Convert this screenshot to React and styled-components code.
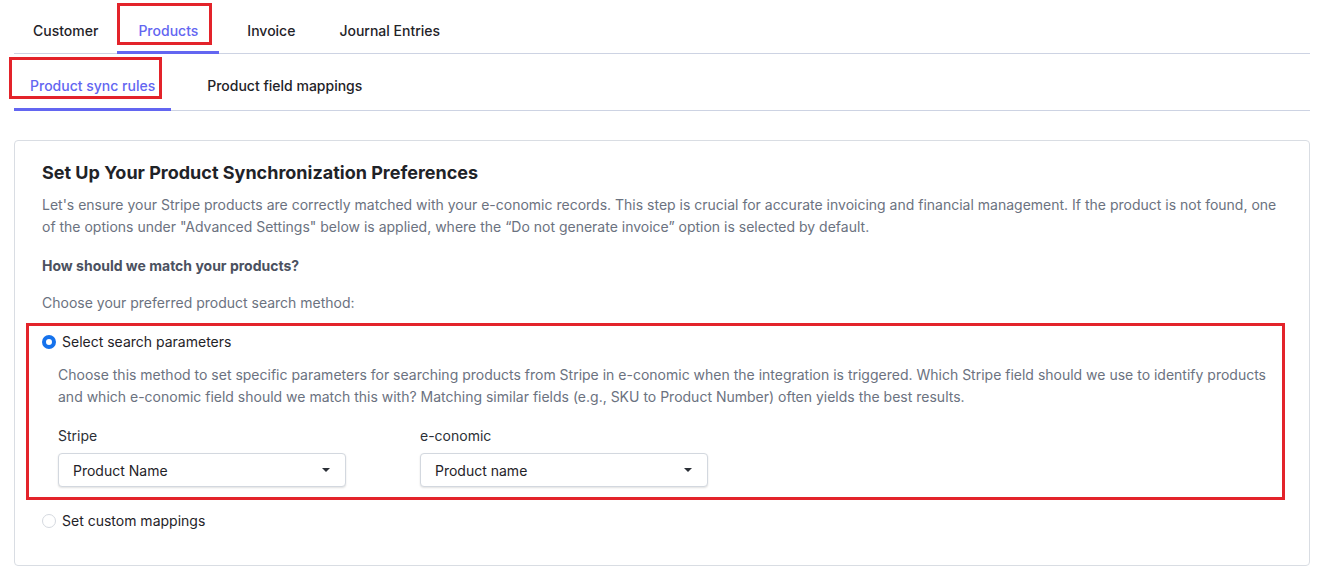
import React from "react";
import styled, { createGlobalStyle, css } from "styled-components";

const Global = createGlobalStyle`
  html, body { margin: 0; padding: 0; background: #fff; }
  body { font-family: Inter, "Noto Sans", "Liberation Sans", sans-serif; color: #1f2328; }
  * { box-sizing: border-box; }
`;

const RED = "#e3232a";
const ACCENT = "#6366f1";

const markBox = css`
  &::after {
    content: "";
    position: absolute;
    inset: ${(p) => p.$mark};
    border: 3px solid ${RED};
    pointer-events: none;
  }
`;

const Page = styled.div`
  padding: 9px 19px 0 14px;
`;

const TabBar = styled.div`
  display: flex;
  align-items: stretch;
  gap: ${(p) => p.$gap || 0}px;
  border-bottom: 1px solid #cdd3e3;
  margin-top: ${(p) => p.$top || 0}px;
`;

const Tab = styled.div`
  position: relative;
  display: flex;
  align-items: center;
  height: ${(p) => p.$h}px;
  padding: 0 ${(p) => p.$px}px;
  margin-left: ${(p) => p.$ml || 0}px;
  margin-bottom: -1px;
  font-size: 14px;
  font-weight: 500;
  color: ${(p) => (p.$active ? ACCENT : "#1f2328")};
  border-bottom: 3px solid ${(p) => (p.$active ? ACCENT : "transparent")};
  white-space: nowrap;
  ${(p) => p.$mark && markBox}
`;

const Card = styled.section`
  margin-top: 29px;
  border: 1px solid #d9dde3;
  border-radius: 4px;
  padding: 19px 26px 33px 27px;
`;

const Title = styled.h2`
  margin: 0 0 8px;
  font-size: 18px;
  line-height: 26px;
  font-weight: 700;
  color: #1f2328;
`;

const Text = styled.p`
  margin: 0 0 ${(p) => p.$mb || 0}px;
  font-size: 14px;
  line-height: 22px;
  font-weight: ${(p) => (p.$bold ? 700 : 400)};
  color: ${(p) => (p.$bold ? "#4b5160" : "#6b7280")};
`;

const OptionBlock = styled.div`
  position: relative;
  margin-top: 17px;
  ${markBox}
`;

const RadioRow = styled.label`
  display: flex;
  align-items: center;
  gap: 6px;
  font-size: 14px;
  line-height: 22px;
  color: #1f2328;
  margin-top: ${(p) => p.$top || 0}px;
`;

const Radio = styled.span`
  width: 14px;
  height: 14px;
  border-radius: 50%;
  flex: none;
  background: #fff;
  border: ${(p) => (p.$checked ? "4px solid #1672ec" : "1px solid #d5d9df")};
`;

const Indented = styled.div`
  padding-left: 16px;
  margin-top: 11px;
`;

const Fields = styled.div`
  display: flex;
  gap: 74px;
  margin-top: 18px;
`;

const Field = styled.div`
  display: flex;
  flex-direction: column;
  gap: 7px;
  width: 288px;
`;

const Label = styled.span`
  font-size: 14px;
  line-height: 20px;
  color: #2b2f36;
`;

const Select = styled.div`
  height: 34px;
  display: flex;
  align-items: center;
  justify-content: space-between;
  padding: 0 15px 0 14px;
  border: 1px solid #d3d8df;
  border-radius: 4px;
  box-shadow: 0 1px 2px rgba(0, 0, 0, 0.12);
  font-size: 14px;
  color: #1f2328;
  background: #fff;
`;

const Caret = styled.span`
  width: 0;
  height: 0;
  border-left: 4px solid transparent;
  border-right: 4px solid transparent;
  border-top: 4px solid #2b2f36;
`;

export default function App() {
  return (
    <>
      <Global />
      <Page>
        <TabBar>
          <Tab $h={45} $px={19}>Customer</Tab>
          <Tab $h={45} $px={21} $active $mark="-6px 7px 6px 0">Products</Tab>
          <Tab $h={45} $px={20} $ml={8}>Invoice</Tab>
          <Tab $h={45} $px={20} $ml={4}>Journal Entries</Tab>
        </TabBar>
        <TabBar $gap={20} $top={9}>
          <Tab $h={48} $px={16} $active $mark="-6px 9px 9px -5px">Product sync rules</Tab>
          <Tab $h={48} $px={16}>Product field mappings</Tab>
        </TabBar>
        <Card>
          <Title>Set Up Your Product Synchronization Preferences</Title>
          <Text $mb={17}>
            Let's ensure your Stripe products are correctly matched with your e-conomic records. This step is crucial
            for accurate invoicing and financial management. If the product is not found, one of the options under
            "Advanced Settings" below is applied, where the “Do not generate invoice” option is selected by default.
          </Text>
          <Text $bold $mb={15}>How should we match your products?</Text>
          <Text>Choose your preferred product search method:</Text>
          <OptionBlock $mark="-8px -2px -13px -16px">
            <RadioRow>
              <Radio $checked />
              Select search parameters
            </RadioRow>
            <Indented>
              <Text>
                Choose this method to set specific parameters for searching products from Stripe in e-conomic when the
                integration is triggered. Which Stripe field should we use to identify products and which e-conomic
                field should we match this with? Matching similar fields (e.g., SKU to Product Number) often yields the
                best results.
              </Text>
              <Fields>
                <Field>
                  <Label>Stripe</Label>
                  <Select>
                    Product Name
                    <Caret />
                  </Select>
                </Field>
                <Field>
                  <Label>e-conomic</Label>
                  <Select>
                    Product name
                    <Caret />
                  </Select>
                </Field>
              </Fields>
            </Indented>
          </OptionBlock>
          <RadioRow $top={23}>
            <Radio />
            Set custom mappings
          </RadioRow>
        </Card>
      </Page>
    </>
  );
}
